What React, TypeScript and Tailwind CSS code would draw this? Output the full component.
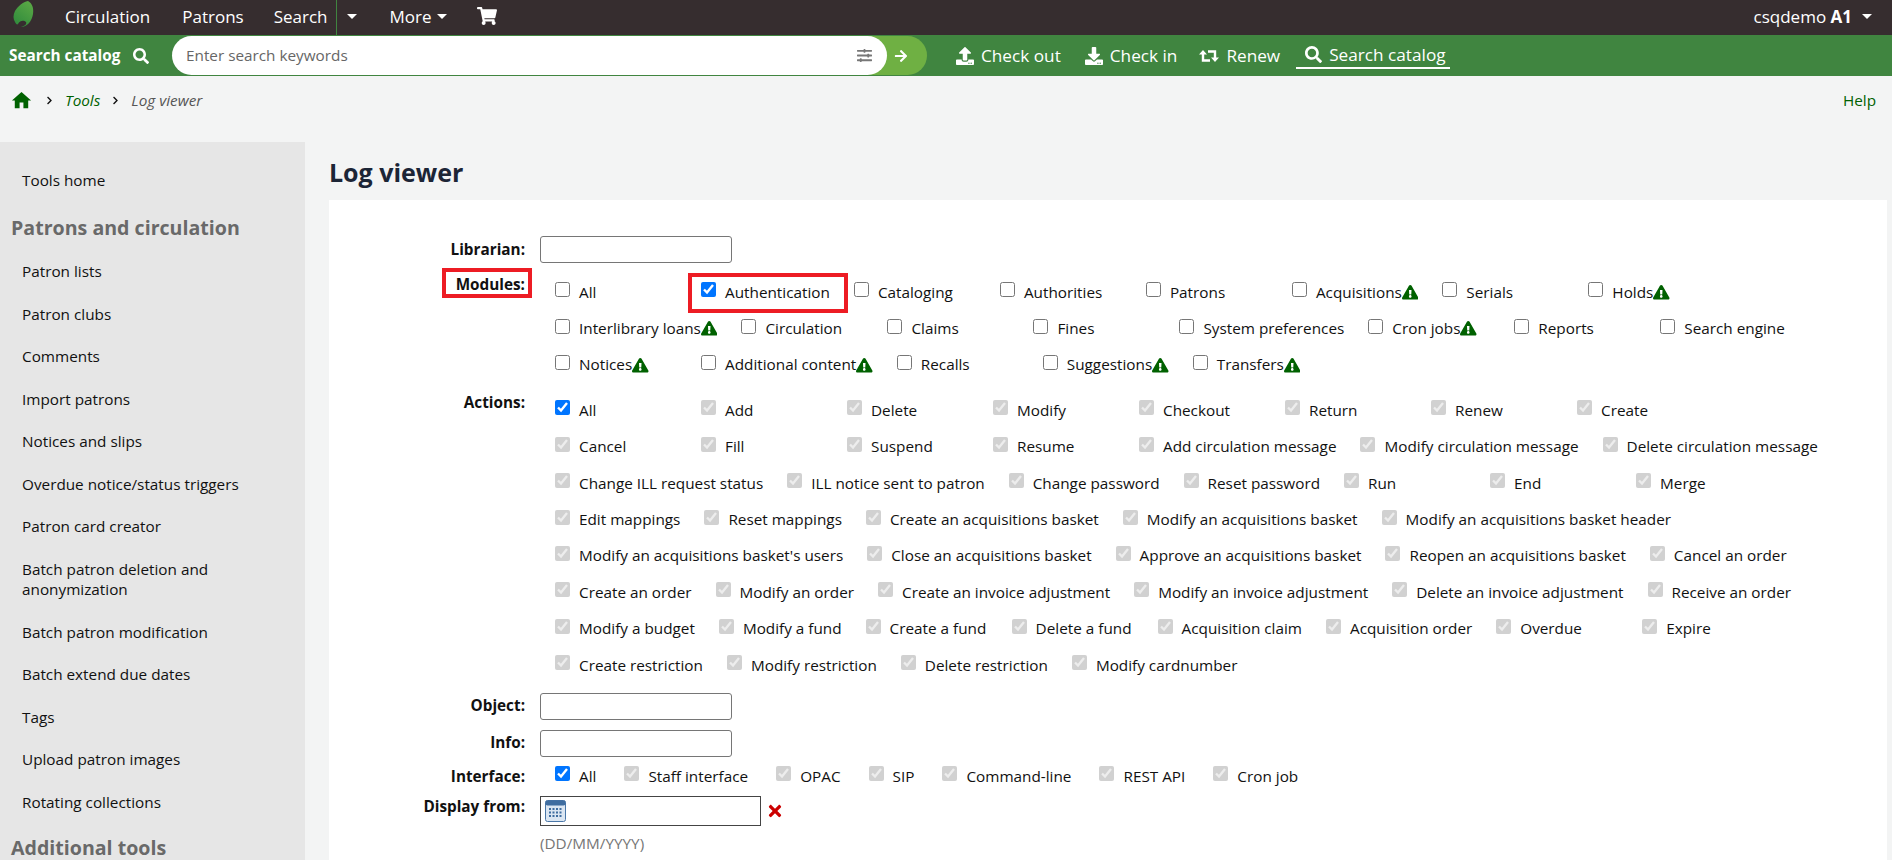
import {
  FaArrowRight,
  FaChevronRight,
  FaDownload,
  FaExclamationTriangle,
  FaSearch,
  FaShoppingCart,
  FaSlidersH,
  FaTimes,
  FaUpload,
} from "react-icons/fa";
import { MdHome } from "react-icons/md";

type Item = { label: string; warn?: boolean; on?: boolean; off?: boolean };

const m = (label: string, warn = false, on = false): Item => ({ label, warn, on });

const MODULES: Item[][] = [
  [m("All"), m("Authentication", false, true), m("Cataloging"), m("Authorities"), m("Patrons"), m("Acquisitions", true), m("Serials"), m("Holds", true)],
  [m("Interlibrary loans", true), m("Circulation"), m("Claims"), m("Fines"), m("System preferences"), m("Cron jobs", true), m("Reports"), m("Search engine")],
  [m("Notices", true), m("Additional content", true), m("Recalls"), m("Suggestions", true), m("Transfers", true)],
];

const ACTIONS: string[][] = [
  ["All", "Add", "Delete", "Modify", "Checkout", "Return", "Renew", "Create"],
  ["Cancel", "Fill", "Suspend", "Resume", "Add circulation message", "Modify circulation message", "Delete circulation message"],
  ["Change ILL request status", "ILL notice sent to patron", "Change password", "Reset password", "Run", "End", "Merge"],
  ["Edit mappings", "Reset mappings", "Create an acquisitions basket", "Modify an acquisitions basket", "Modify an acquisitions basket header"],
  ["Modify an acquisitions basket's users", "Close an acquisitions basket", "Approve an acquisitions basket", "Reopen an acquisitions basket", "Cancel an order"],
  ["Create an order", "Modify an order", "Create an invoice adjustment", "Modify an invoice adjustment", "Delete an invoice adjustment", "Receive an order"],
  ["Modify a budget", "Modify a fund", "Create a fund", "Delete a fund", "Acquisition claim", "Acquisition order", "Overdue", "Expire"],
  ["Create restriction", "Modify restriction", "Delete restriction", "Modify cardnumber"],
];

const SIDE_TOP = [
  "Patron lists",
  "Patron clubs",
  "Comments",
  "Import patrons",
  "Notices and slips",
  "Overdue notice/status triggers",
  "Patron card creator",
  "Batch patron deletion and anonymization",
  "Batch patron modification",
  "Batch extend due dates",
  "Tags",
  "Upload patron images",
  "Rotating collections",
];

function Caret() {
  return <span className="inline-block h-0 w-0 border-x-[5px] border-t-[5px] border-x-transparent border-t-white" />;
}

function Leaf() {
  return (
    <svg width="22" height="26" viewBox="0 0 22 26" className="mb-[4px] shrink-0">
      <defs>
        <linearGradient id="leaf" x1="0.8" y1="0" x2="0.2" y2="1">
          <stop offset="0" stopColor="#5aa845" />
          <stop offset="1" stopColor="#2f8a3c" />
        </linearGradient>
      </defs>
      <path
        d="M16 0C20 2 22 7 21 13 20 20 15 26 9 26 13 25 15 23 14 21 12 19 8 19 6 23 5 24 4 23 3 21 1 18 1 14 3 10 6 5 11 1 16 0z"
        fill="url(#leaf)"
      />
    </svg>
  );
}

function Retweet() {
  return (
    <svg width="20" height="14" viewBox="0 0 20 14" fill="none" className="ml-[22px] shrink-0">
      <path d="M4 4V11.5H11M16 10V2.5H9" stroke="#fff" strokeWidth="2.4" />
      <path d="M0 5.5L4 1 8 5.5zM12 8.5L16 13 20 8.5z" fill="#fff" />
    </svg>
  );
}

function Calendar() {
  return (
    <svg width="21" height="22" viewBox="0 0 21 22" className="shrink-0">
      <rect x="0.5" y="0.5" width="20" height="21" rx="2" fill="#dbe6f2" stroke="#4a77a8" />
      <rect x="0.5" y="0.5" width="20" height="5" rx="2" fill="#3f6da0" />
      {[8, 11.5, 15].map((y) =>
        [4, 7.5, 11, 14.5].map((x) => <rect key={`${x}-${y}`} x={x} y={y} width="2" height="2" fill="#3f6da0" />),
      )}
    </svg>
  );
}

function Check({ on, off }: { on?: boolean; off?: boolean }) {
  return <input type="checkbox" readOnly checked={!!on} disabled={off} className="mb-[5px] ml-0 mr-[9px] h-[15px] w-[15px] shrink-0" />;
}

function Choice({ label, warn, on, off }: Item) {
  return (
    <div className="flex h-[36.4px] min-w-[146px] items-center pr-[24px]">
      <Check on={on} off={off} />
      <span className="whitespace-nowrap">{label}</span>
      {warn && <FaExclamationTriangle className="text-[16.5px] text-[#006100]" />}
    </div>
  );
}

function Label({ children, className = "" }: { children: string; className?: string }) {
  return <div className={`w-[196px] shrink-0 text-right font-bold leading-[21px] ${className}`}>{children}</div>;
}

function TextBox() {
  return <input type="text" readOnly className="h-[27px] w-[192px] rounded-[3px] border border-[#767676] bg-white" />;
}

export default function App() {
  return (
    <div className="h-[860px] overflow-hidden bg-[#f3f4f4] text-[15.3px] leading-[21px] text-[#111] [font-family:'Open_Sans',sans-serif]">
      {/* top nav */}
      <header className="flex h-[35px] items-center bg-[#362d2f] pb-[3px] pl-[12px] pr-[20px] text-[17px] text-white">
        <Leaf />
        <span className="ml-[31px]">Circulation</span>
        <span className="ml-[32px]">Patrons</span>
        <span className="ml-[30px]">Search</span>
        <span className="-mb-[3px] ml-[8px] w-px self-stretch bg-[#408540]" />
        <span className="ml-[10px] flex"><Caret /></span>
        <span className="ml-[33px]">More</span>
        <span className="ml-[5px] flex"><Caret /></span>
        <FaShoppingCart className="ml-[30px] text-[20px]" />
        <span className="ml-auto">csqdemo <b>A1</b></span>
        <span className="ml-[10px] flex"><Caret /></span>
      </header>

      {/* search bar */}
      <div className="flex h-[41px] items-center bg-[#408540] text-white">
        <div className="flex h-full w-[173px] items-center gap-[13px] pl-[9px] text-[15.3px] font-bold">
          <span>Search catalog</span>
          <FaSearch className="text-[16px]" />
        </div>
        <div className="z-10 -ml-px flex h-[39px] w-[715px] items-center justify-between rounded-[20px] bg-white pl-[14px] pr-[15px] text-[#666]">
          <span>Enter search keywords</span>
          <FaSlidersH className="text-[15px] text-[#777]" />
        </div>
        <div className="-ml-[20px] flex h-[39px] w-[60px] items-center justify-end rounded-r-[20px] bg-[#6fb043] pr-[19px]">
          <FaArrowRight className="text-[14px]" />
        </div>
        <div className="ml-[29px] flex items-center text-[17.2px] leading-none">
          <FaUpload className="text-[18px]" />
          <span className="ml-[7px]">Check out</span>
          <FaDownload className="ml-[24px] text-[18px]" />
          <span className="ml-[7px]">Check in</span>
          <Retweet />
          <span className="ml-[7px]">Renew</span>
          <div className="ml-[16px] flex h-[27px] items-center gap-[7px] border-b-2 border-white pl-[9px] pr-[4px]">
            <FaSearch className="text-[17px]" />
            <span>Search catalog</span>
          </div>
        </div>
      </div>

      {/* breadcrumb */}
      <div className="flex h-[66px] items-start pl-[10px] pr-[16px] pt-[14px]">
        <MdHome className="mt-[-1px] text-[23px] text-[#006100]" />
        <FaChevronRight className="ml-[12px] mt-[6px] text-[9px] text-[#111]" />
        <i className="ml-[11px] text-[#006100]">Tools</i>
        <FaChevronRight className="ml-[11px] mt-[6px] text-[9px] text-[#111]" />
        <i className="ml-[11px] text-[#555]">Log viewer</i>
        <span className="ml-auto text-[#006100]">Help</span>
      </div>

      <div className="flex">
        {/* sidebar */}
        <aside className="h-[718px] w-[305px] shrink-0 bg-[#e6e6e6] pt-[28px]">
          <div className="px-[22px] py-[0px]">Tools home</div>
          <h5 className="mb-[8px] mt-[23px] pl-[11px] text-[19.6px] font-bold leading-[28px] text-[#696969]">Patrons and circulation</h5>
          <ul>
            {SIDE_TOP.map((s) => (
              <li key={s} className="px-[22px] py-[11px] leading-[20.5px]">{s}</li>
            ))}
          </ul>
          <h5 className="mt-[13px] pl-[11px] text-[19.6px] font-bold leading-[24px] text-[#696969]">Additional tools</h5>
        </aside>

        {/* main */}
        <main className="ml-[24px] w-[1558px]">
          <h1 className="mt-[14px] text-[25px] font-bold leading-[32px] text-[#1c2536]">Log viewer</h1>
          <form className="relative mt-[12px] h-[700px] bg-white pt-[36px]">
            <div className="flex items-center gap-[15px]">
              <Label>Librarian:</Label>
              <TextBox />
            </div>

            <div className="mt-[11px] flex gap-[15px]">
              <Label>Modules:</Label>
              <div className="pl-[15px]">
                {MODULES.map((row, i) => (
                  <div key={i} className="flex">
                    {row.map((it) => <Choice key={it.label} {...it} />)}
                  </div>
                ))}
              </div>
            </div>

            <div className="mt-[9px] flex gap-[15px]">
              <Label>Actions:</Label>
              <div className="pl-[15px]">
                {ACTIONS.map((row, i) => (
                  <div key={i} className="flex">
                    {row.map((a, j) => (
                      <Choice key={a} label={a} on off={!(i === 0 && j === 0)} />
                    ))}
                  </div>
                ))}
              </div>
            </div>

            <div className="mt-[10px] flex items-center gap-[15px]">
              <Label className="-mt-[3px]">Object:</Label>
              <TextBox />
            </div>
            <div className="mt-[10px] flex items-center gap-[15px]">
              <Label className="-mt-[3px]">Info:</Label>
              <TextBox />
            </div>
            <div className="mt-[1px] flex h-[36px] items-center gap-[15px]">
              <Label>Interface:</Label>
              <div className="flex items-center pl-[15px]">
                <Check on />
                <span className="mr-[28px]">All</span>
                {["Staff interface", "OPAC", "SIP", "Command-line", "REST API", "Cron job"].map((s) => (
                  <div key={s} className="mr-[28px] flex items-center">
                    <Check on off />
                    <span>{s}</span>
                  </div>
                ))}
              </div>
            </div>
            <div className="mt-[2px] flex gap-[15px]">
              <Label>Display from:</Label>
              <div>
                <div className="flex items-center">
                  <div className="flex h-[30px] w-[221px] items-center border border-[#444] pl-[4px]">
                    <Calendar />
                  </div>
                  <FaTimes className="ml-[5px] text-[18px] text-[#c00]" />
                </div>
                <div className="mt-[7px] text-[#767676]">(DD/MM/YYYY)</div>
              </div>
            </div>

            {/* annotation boxes from the screenshot */}
            <span className="absolute left-[113px] top-[68px] h-[30px] w-[90px] border-4 border-[#ed1c24]" />
            <span className="absolute left-[359px] top-[73px] h-[40px] w-[160px] border-4 border-[#ed1c24]" />
          </form>
        </main>
      </div>
    </div>
  );
}
